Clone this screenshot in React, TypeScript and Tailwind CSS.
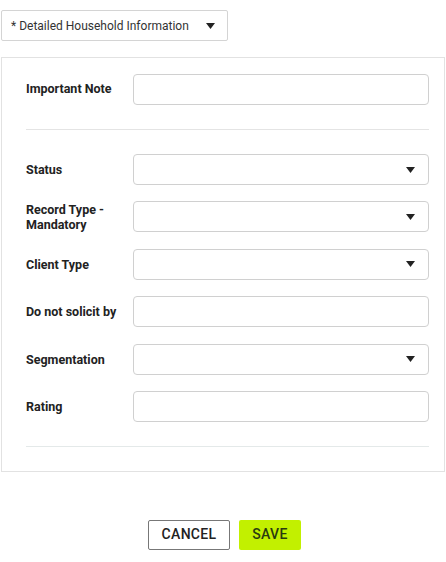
import React from "react";

const Arrow = () => (
  <svg width="9" height="6" viewBox="0 0 9 6" className="shrink-0">
    <path d="M0 0 L9 0 L4.5 6 Z" fill="#222" />
  </svg>
);

const rows: { label: React.ReactNode; select: boolean }[] = [
  { label: "Status", select: true },
  { label: <>Record Type -<br />Mandatory</>, select: true },
  { label: "Client Type", select: true },
  { label: "Do not solicit by", select: false },
  { label: "Segmentation", select: true },
  { label: "Rating", select: false },
];

const Field = ({ select }: { select: boolean }) => (
  <div className="flex-1 h-[31px] border border-[#d0d0d0] rounded-[4px] bg-white flex items-center justify-end pr-[13px]">
    {select && <Arrow />}
  </div>
);

export default function App() {
  return (
    <div className="w-[446px] h-[562px] bg-white" style={{ fontFamily: "Roboto, 'Liberation Sans', sans-serif" }}>
      <div className="pt-[10px] pl-[1px]">
        <div className="w-[227px] h-[31px] border border-[#d4d4d4] rounded-[2px] flex items-center pl-[9px] pr-[12px] justify-between">
          <span className="text-[12px] text-[#333]">* Detailed Household Information</span>
          <Arrow />
        </div>
      </div>
      <div className="mt-[16px] ml-[1px] w-[444px] border border-[#e2e2e2] pl-[24px] pr-[15px] pt-[16px] pb-[24px]">
        <div className="flex items-center">
          <div className="w-[107px] text-[12.5px] font-bold text-[#222]">Important Note</div>
          <Field select={false} />
        </div>
        <div className="h-px bg-[#e4e4e4] mt-[24px] mb-[24px]" />
        <div className="flex flex-col gap-[16.4px]">
          {rows.map((r, i) => (
            <div key={i} className="flex items-center">
              <div className="w-[107px] text-[12.5px] font-bold text-[#222] leading-[15px]">{r.label}</div>
              <Field select={r.select} />
            </div>
          ))}
        </div>
        <div className="h-px bg-[#e4e9e9] mt-[24px]" />
      </div>
      <div className="flex justify-center gap-[9px] mt-[48px] pl-[3px]">
        <button className="w-[82px] h-[30px] border border-[#777] rounded-[2px] bg-white text-[14px] font-medium text-[#222] tracking-[0.3px]">CANCEL</button>
        <button className="w-[62px] h-[30px] rounded-[2px] bg-[#c2f000] text-[14px] font-medium text-[#2a3a10] tracking-[0.3px]">SAVE</button>
      </div>
    </div>
  );
}
